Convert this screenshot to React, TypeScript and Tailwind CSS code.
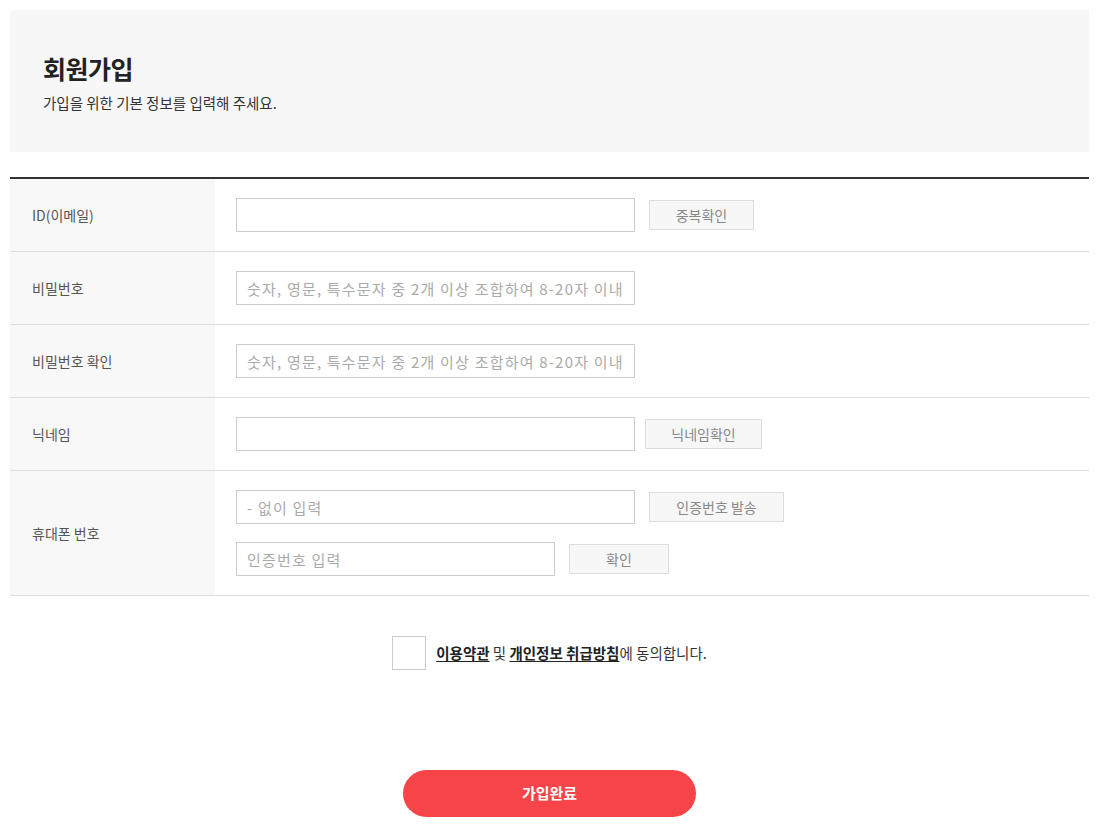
import { useState } from "react";

const font = { fontFamily: '"Noto Sans CJK KR", "Noto Sans", sans-serif' };

function Row({ label, children, tall }: { label: string; children: React.ReactNode; tall?: boolean }) {
  return (
    <div className={`flex border-b border-[#dddddd] ${tall ? "h-[125px]" : "h-[73px]"}`}>
      <div className="w-[205px] shrink-0 bg-[#f8f8f8] flex items-center pl-[22px] text-[14px] text-[#555555]">{label}</div>
      <div className="flex-1 flex flex-col justify-center pl-[21px] gap-[18px]">{children}</div>
    </div>
  );
}

function Field({ placeholder, w = "w-[399px]" }: { placeholder?: string; w?: string }) {
  return (
    <input
      placeholder={placeholder}
      className={`${w} h-[34px] border border-[#cccccc] px-[10px] text-[15px] tracking-[1.2px] text-[#333] placeholder:text-[#aaaaaa] outline-none`}
      style={font}
    />
  );
}

function Btn({ children, w, ml = "ml-[14px]" }: { children: React.ReactNode; w: string; ml?: string }) {
  return (
    <button className={`${w} ${ml} h-[30px] bg-[#f7f7f7] border border-[#dddddd] text-[14px] text-[#888888]`}>{children}</button>
  );
}

export default function App() {
  const [agree, setAgree] = useState(false);

  return (
    <div className="min-h-[838px] bg-white px-[10px] pt-[10px]" style={font}>
      {/* 상단 타이틀 */}
      <div className="h-[142px] bg-[#f7f7f7] pl-[33px] pt-[40px]">
        <h1 className="text-[25px] font-bold text-[#222222] leading-[36px] tracking-[-0.5px]">회원가입</h1>
        <p className="mt-[6px] text-[14.5px] text-[#333333]">가입을 위한 기본 정보를 입력해 주세요.</p>
      </div>

      {/* 입력 폼 */}
      <div className="mt-[25px] border-t-2 border-[#333333]">
        <Row label="ID(이메일)">
          <div className="flex items-center">
            <Field />
            <Btn w="w-[105px]">중복확인</Btn>
          </div>
        </Row>
        <Row label="비밀번호">
          <Field placeholder="숫자, 영문, 특수문자 중 2개 이상 조합하여 8-20자 이내" />
        </Row>
        <Row label="비밀번호 확인">
          <Field placeholder="숫자, 영문, 특수문자 중 2개 이상 조합하여 8-20자 이내" />
        </Row>
        <Row label="닉네임">
          <div className="flex items-center">
            <Field />
            <Btn w="w-[117px]" ml="ml-[10px]">닉네임확인</Btn>
          </div>
        </Row>
        <Row label="휴대폰 번호" tall>
          <div className="flex items-center">
            <Field placeholder="- 없이 입력" />
            <Btn w="w-[135px]">인증번호 발송</Btn>
          </div>
          <div className="flex items-center">
            <Field placeholder="인증번호 입력" w="w-[319px]" />
            <Btn w="w-[100px]">확인</Btn>
          </div>
        </Row>
      </div>

      {/* 약관 동의 */}
      <div className="mt-[40px] flex items-center justify-center">
        <button
          onClick={() => setAgree(!agree)}
          className="w-[34px] h-[34px] border border-[#cccccc] bg-white flex items-center justify-center"
        >
          {agree && <span className="text-[#f64449] text-[18px]">✓</span>}
        </button>
        <p className="ml-[10px] text-[14.5px] text-[#333333]">
          <a className="font-bold underline underline-offset-2 text-[#222]">이용약관</a> 및{" "}
          <a className="font-bold underline underline-offset-2 text-[#222]">개인정보 취급방침</a>에 동의합니다.
        </p>
      </div>

      <div className="mt-[100px] flex justify-center">
        <button className="w-[293px] h-[47px] rounded-full bg-[#f64449] text-white text-[15px] font-bold">가입완료</button>
      </div>
    </div>
  );
}
